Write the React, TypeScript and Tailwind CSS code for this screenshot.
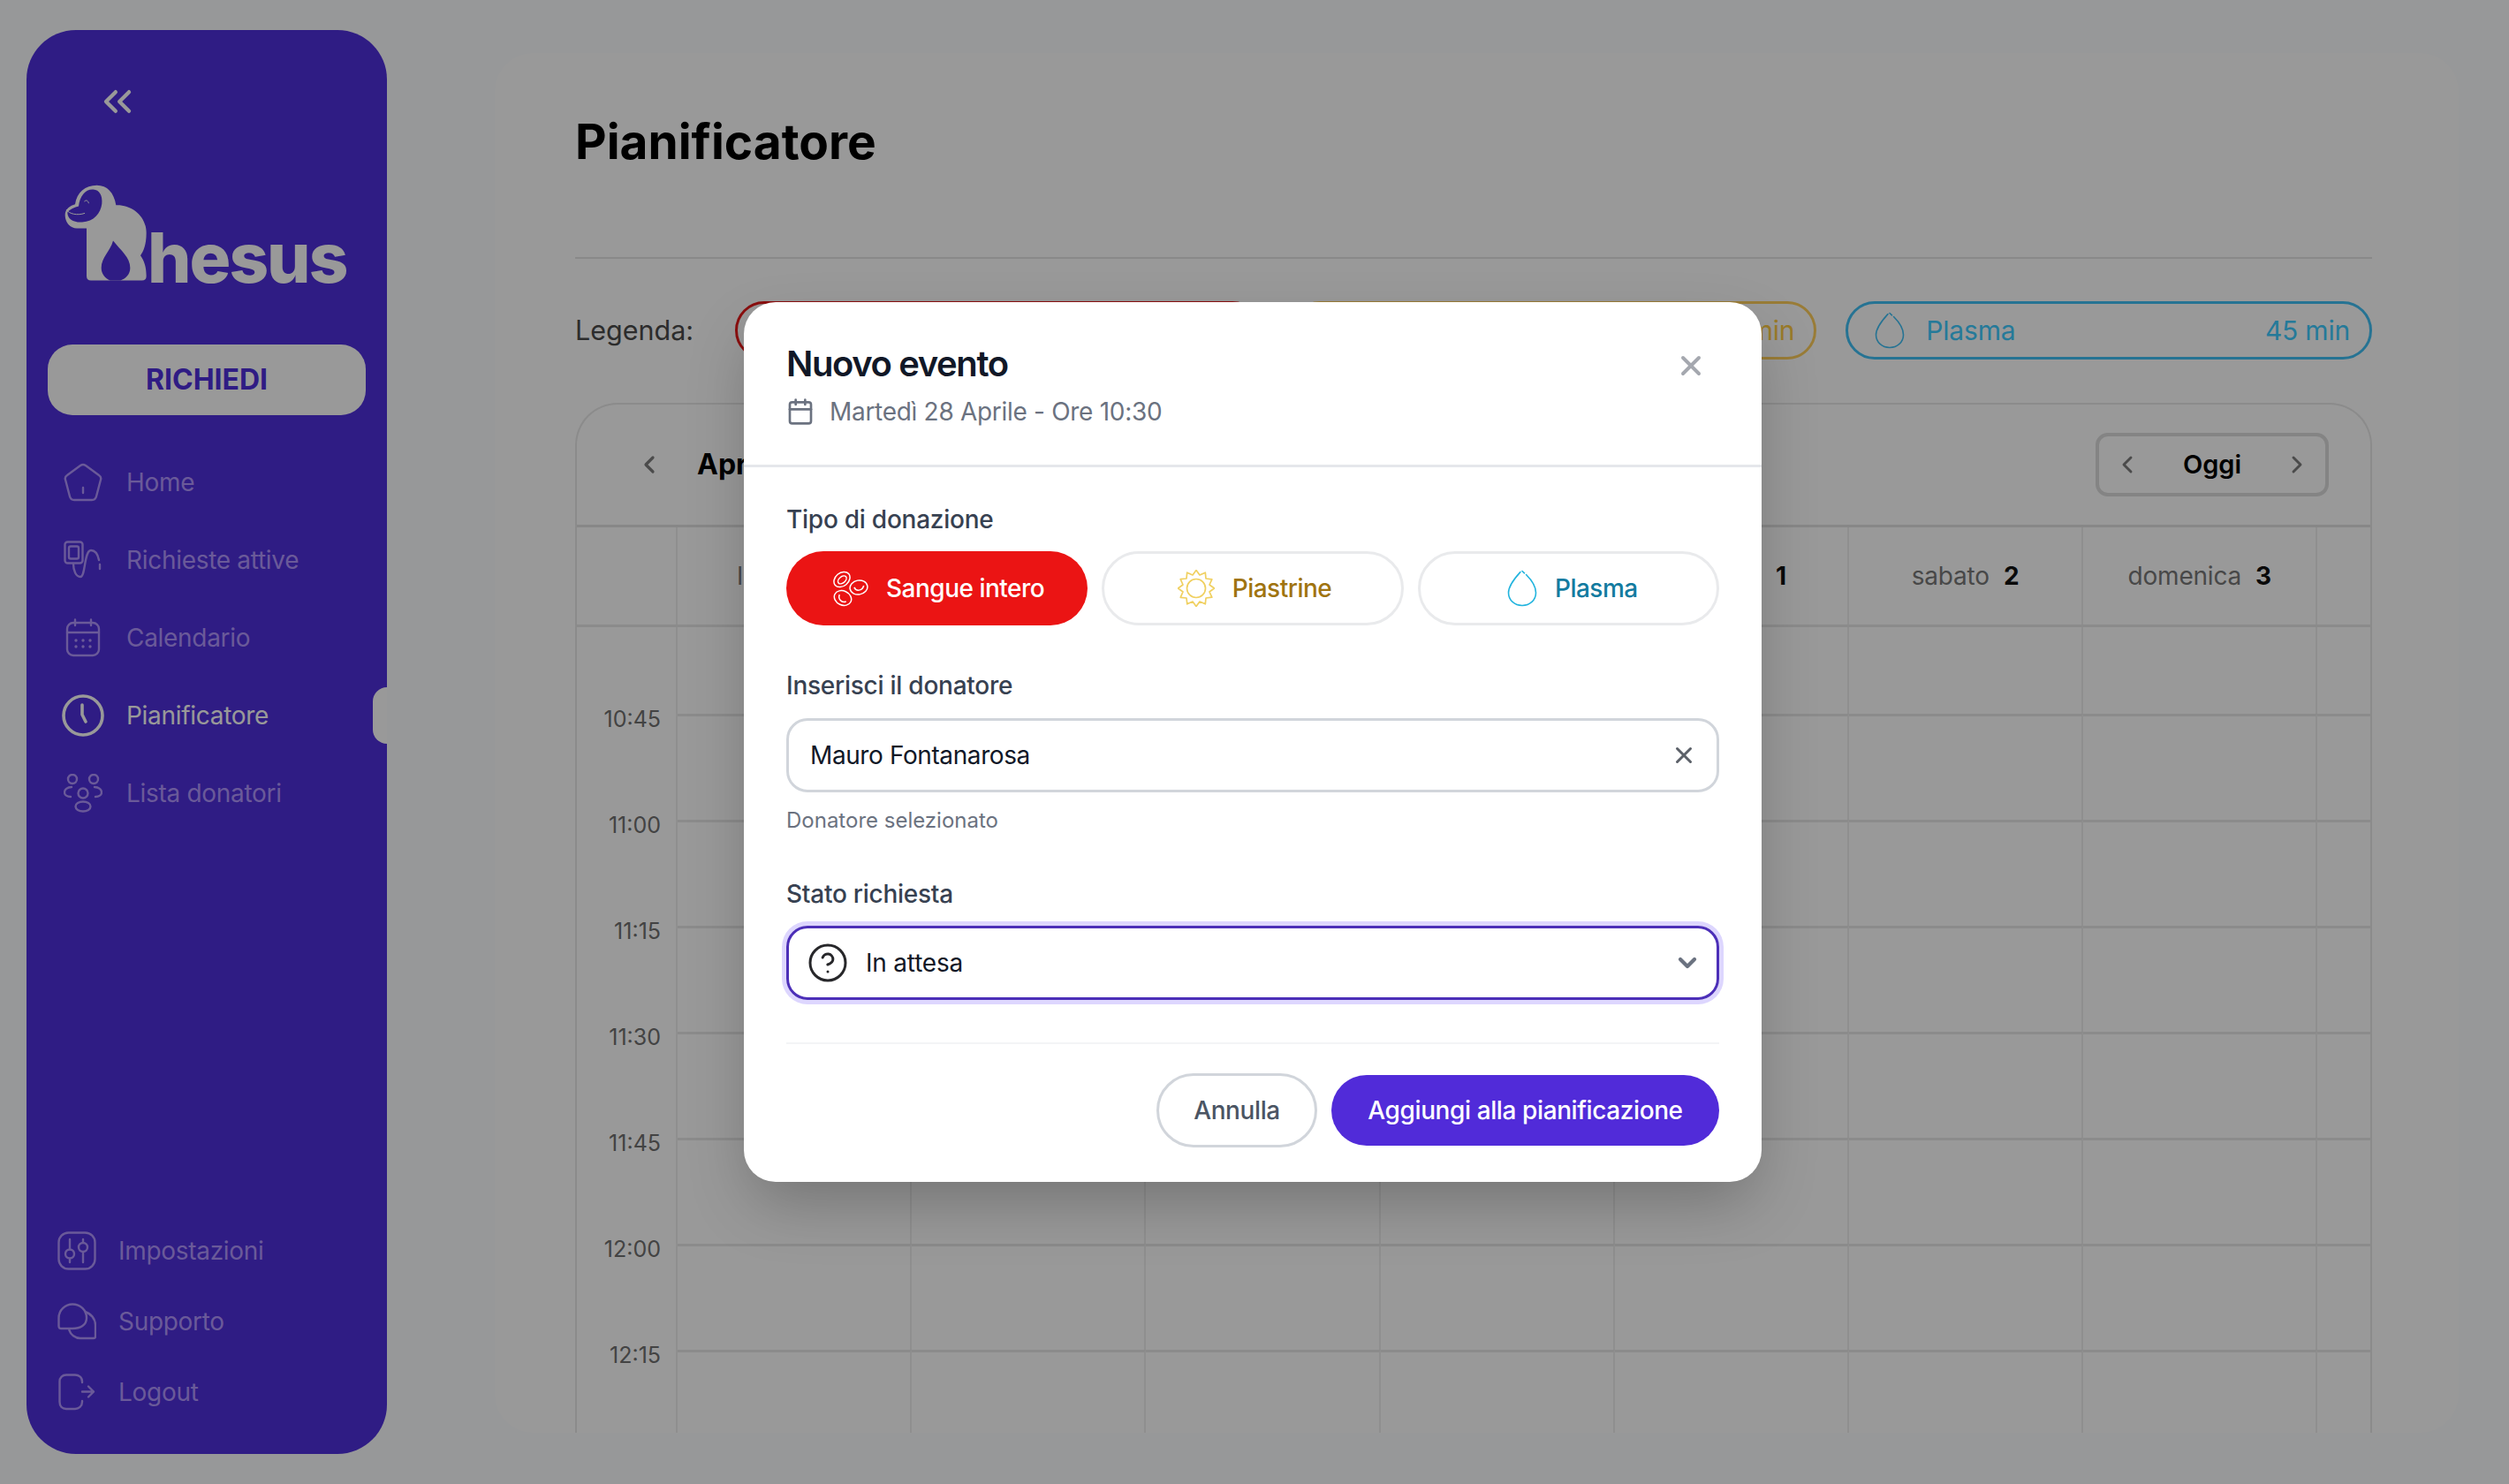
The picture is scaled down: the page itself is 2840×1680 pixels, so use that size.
import React from "react";
import { Calendar, ChevronDown, ChevronLeft, ChevronRight, ChevronsLeft, CircleHelp, X } from "lucide-react";

const Drop = ({ w, h, stroke, sw = 1.6 }: { w: number; h: number; stroke: string; sw?: number }) => (
  <svg width={w} height={h} viewBox="0 0 34 42" fill="none" stroke={stroke} strokeWidth={sw} className="shrink-0">
    <path d="M15 2.5 C10 8 1.5 17 1.5 26 C1.5 34.5 8.5 40.5 17 40.5 C25.5 40.5 32.5 34.5 32.5 26 C32.5 17 26 10 21.5 5.5 M17 1.5 L19.5 3.8" strokeLinecap="round" />
  </svg>
);

const sunPoints = Array.from({ length: 24 }, (_, i) => {
  const r = i % 2 === 0 ? 20.5 : 15.5;
  const a = (i * Math.PI) / 12 - Math.PI / 2;
  return `${(21 + r * Math.cos(a)).toFixed(1)},${(21 + r * Math.sin(a)).toFixed(1)}`;
}).join(" ");

const Sun = () => (
  <svg width="42" height="42" viewBox="0 0 42 42" fill="none" stroke="#f0d060" strokeWidth="1.7" className="shrink-0">
    <polygon points={sunPoints} strokeLinejoin="round" />
    <circle cx="21" cy="21" r="10.5" />
  </svg>
);

const Cells = ({ color = "#ffffff" }: { color?: string }) => (
  <svg width="40" height="42" viewBox="0 0 40 42" fill="none" stroke={color} strokeWidth="1.5" className="shrink-0">
    <g transform="rotate(-40 10 11)"><ellipse cx="10" cy="11" rx="10" ry="7.5" /><ellipse cx="10" cy="11.5" rx="5.5" ry="3.5" /></g>
    <g transform="rotate(-10 29 20)"><ellipse cx="29" cy="20" rx="10" ry="8" /><path d="M24 19 C25 24 32 25 35 19" /></g>
    <g transform="rotate(25 11 32)"><ellipse cx="11" cy="32" rx="10" ry="8" /><path d="M6 30 C6 35 12 38 16 34" /></g>
  </svg>
);

const IconHome = () => (
  <svg width="44" height="44" viewBox="0 0 44 44" fill="none" stroke="currentColor" strokeWidth="2.4" strokeLinejoin="round">
    <path d="M19 3 Q22 1 25 3 L40 14 Q43 16 42 19 L37 38 Q36 42 32 42 L12 42 Q8 42 7 38 L2 19 Q1 16 4 14 Z" />
    <path d="M22 28 V34" strokeLinecap="round" />
  </svg>
);
const IconMonitor = () => (
  <svg width="44" height="44" viewBox="0 0 44 44" fill="none" stroke="currentColor" strokeWidth="2.4" strokeLinecap="round" strokeLinejoin="round">
    <rect x="1.5" y="1.5" width="20" height="24" rx="3" />
    <rect x="6" y="6.5" width="11" height="14" rx="2" />
    <path d="M11 26 C11 34 14 41 19 41 C25 41 23 11 31 11 C37 11 39 17 40 22 M41 27 V32" />
  </svg>
);
const IconCalendar = () => (
  <svg width="44" height="44" viewBox="0 0 44 44" fill="none" stroke="currentColor" strokeWidth="2.4" strokeLinecap="round">
    <rect x="4" y="5" width="36" height="37" rx="7" />
    <path d="M4 16 H40 M13 1.5 V8 M31 1.5 V8" />
    <g fill="currentColor" stroke="none">
      <circle cx="14" cy="25" r="1.7" /><circle cx="22" cy="25" r="1.7" /><circle cx="30" cy="25" r="1.7" />
      <circle cx="14" cy="32" r="1.7" /><circle cx="22" cy="32" r="1.7" /><circle cx="30" cy="32" r="1.7" />
    </g>
  </svg>
);
const IconClock = () => (
  <svg width="48" height="48" viewBox="0 0 48 48" fill="none" stroke="currentColor" strokeWidth="3.6" strokeLinecap="round" strokeLinejoin="round">
    <circle cx="24" cy="24" r="22" />
    <path d="M23 12 V23 L27 31" />
  </svg>
);
const IconPeople = () => (
  <svg width="44" height="44" viewBox="0 0 44 44" fill="none" stroke="currentColor" strokeWidth="2.4" strokeLinecap="round">
    <circle cx="10" cy="6" r="5" /><circle cx="34" cy="6" r="5" />
    <circle cx="22" cy="22" r="5.5" />
    <path d="M9 15 C4 15 1 18 1 21 C1 24 4 26 8 26 M35 15 C40 15 43 18 43 21 C43 24 40 26 36 26" />
    <ellipse cx="22" cy="37" rx="8.5" ry="5.5" />
  </svg>
);
const IconSettings = () => (
  <svg width="44" height="44" viewBox="0 0 44 44" fill="none" stroke="currentColor" strokeWidth="2.4" strokeLinecap="round">
    <rect x="1.5" y="1.5" width="41" height="41" rx="11" />
    <path d="M14 9 V20 M14 32 V35 M29 9 V12 M29 24 V35" />
    <circle cx="14" cy="25.5" r="5" /><circle cx="29" cy="18" r="5" />
  </svg>
);
const IconSupport = () => (
  <svg width="44" height="42" viewBox="0 0 44 42" fill="none" stroke="currentColor" strokeWidth="2.4" strokeLinejoin="round">
    <path d="M1.5 26 V17 C1.5 8 9 1.5 17 1.5 C26 1.5 33 8 33 17 C33 25 26 29 17 29 H4.5 Q1.5 29 1.5 26 Z" />
    <path d="M31 10 C38 12 43 18 43 25 V38 Q43 40 41 40 H26 C20 40 15 36 13 30" />
  </svg>
);
const IconLogout = () => (
  <svg width="42" height="42" viewBox="0 0 42 42" fill="none" stroke="currentColor" strokeWidth="2.4" strokeLinecap="round" strokeLinejoin="round">
    <path d="M27 10 V9 C27 4 23 1.5 19 1.5 H9 C4.5 1.5 1.5 4.5 1.5 9 V32 C1.5 37 4.5 40 9 40 H19 C23 40 27 37 27 32 V31" />
    <path d="M27 20.5 H40 M34 14.5 L40 20.5 L34 26.5" />
  </svg>
);

const Logo = () => (
  <svg width="95" height="112" viewBox="40 55 285 335" className="shrink-0">
    <path fill="#ffffff" d="M42 160 C42 140 60 128 76 124 C82 85 110 60 150 60 C185 60 208 85 215 127 C270 125 318 165 318 222 C318 262 308 285 298 298 C310 315 318 335 318 368 Q318 383 303 383 L130 383 Q115 383 115 368 L115 206 L82 206 C60 206 42 186 42 160 Z" />
    <path fill="#4f2fdc" d="M50 152 C58 140 75 135 88 131 C92 95 112 72 138 74 C158 75 170 95 167 122 C163 155 140 183 100 185 C72 187 50 175 50 152 Z" />
    <path fill="none" stroke="#ffffff" strokeWidth="3" strokeLinecap="round" d="M47 143 C55 158 85 163 108 155 M108 114 C114 108 120 112 122 120" />
    <path fill="#4f2fdc" d="M205 248 C232 282 263 305 263 340 C263 362 248 376 230 383 L195 383 C178 376 165 360 165 340 C165 305 195 285 205 248 Z" />
  </svg>
);

const NavRow = ({ icon, label, active }: { icon: React.ReactNode; label: string; active?: boolean }) => (
  <div className={`flex h-[88px] items-center pl-[40px] ${active ? "text-white" : "text-[#b196ff]"}`}>
    <span className="flex w-[48px] justify-center">{icon}</span>
    <span className="ml-[25px] text-[28px] tracking-[-0.3px]">{label}</span>
  </div>
);
const BottomRow = ({ icon, label }: { icon: React.ReactNode; label: string }) => (
  <div className="flex h-[80px] items-center pl-[35px] text-[#b196ff]">
    <span className="flex w-[44px] justify-center">{icon}</span>
    <span className="ml-[25px] text-[28px] tracking-[-0.3px]">{label}</span>
  </div>
);

const cols = "grid grid-cols-[114px_repeat(7,265.2px)_1fr]";
// The labels of Tuesday, Wednesday and Thursday lie fully behind the dialog.
const days: [string, string][] = [
  ["lunedì", "27"], ["", ""], ["", ""], ["", ""],
  ["venerdì", "1"], ["sabato", "2"], ["domenica", "3"],
];
const times = ["", "10:45", "11:00", "11:15", "11:30", "11:45", "12:00", "12:15"];

const Pill = ({ border, text, icon, label, dur }: { border: string; text: string; icon: React.ReactNode; label: string; dur: string }) => (
  <div className={`flex h-[66px] flex-1 items-center rounded-full border-[3px] pl-[30px] pr-[22px] text-[30px] tracking-[-0.2px] ${border} ${text}`}>
    {icon}
    <span className="ml-[24px]">{label}</span>
    <span className="ml-auto">{dur}</span>
  </div>
);

const DonationBtn = ({ cls, icon, label }: { cls: string; icon: React.ReactNode; label: string }) => (
  <div className={`flex h-[84px] items-center justify-center gap-[20px] rounded-full text-[28px] font-medium tracking-[-0.5px] ${cls}`}>
    {icon}
    <span>{label}</span>
  </div>
);

export default function App() {
  return (
    <div className="relative flex h-[1680px] w-[2840px] overflow-hidden bg-[#fcfdff] font-['Inter',sans-serif]">
      <aside className="ml-[30px] mt-[34px] flex h-[1612px] w-[408px] shrink-0 flex-col rounded-[56px] bg-[#4f2fdc] pb-[30px]">
        <div className="ml-[77px] mt-[55px] text-white">
          <ChevronsLeft size={52} strokeWidth={2} />
        </div>
        <div className="ml-[43px] mt-[67px] flex items-end">
          <Logo />
          <span className="-ml-[1px] text-[78px] font-extrabold leading-[57px] tracking-[-2px] text-white">hesus</span>
        </div>
        <div className="ml-[24px] mt-[70px] flex h-[80px] w-[360px] items-center justify-center rounded-[28px] bg-white text-[32px] font-bold text-[#4f2fdc]">
          RICHIEDI
        </div>
        <nav className="relative mt-[32px]">
          <NavRow icon={<IconHome />} label="Home" />
          <NavRow icon={<IconMonitor />} label="Richieste attive" />
          <NavRow icon={<IconCalendar />} label="Calendario" />
          <NavRow icon={<IconClock />} label="Pianificatore" active />
          <NavRow icon={<IconPeople />} label="Lista donatori" />
          <div className="absolute right-0 top-[276px] h-[64px] w-[16px] rounded-l-[16px] bg-white" />
        </nav>
        <div className="mt-auto">
          <BottomRow icon={<IconSettings />} label="Impostazioni" />
          <BottomRow icon={<IconSupport />} label="Supporto" />
          <BottomRow icon={<IconLogout />} label="Logout" />
        </div>
      </aside>

      <main className="ml-[122px] mt-[60px] flex h-[1562px] w-[2223px] flex-col overflow-hidden rounded-[44px] bg-white pl-[91px] pr-[98px]">
        <h1 className="mt-[64px] text-[55px] font-bold leading-[72px] text-black">Pianificatore</h1>
        <div className="mt-[95px] h-[2px] bg-[#e5e5e5]" />
        <div className="mt-[48px] flex items-center gap-[33px]">
          <span className="-mr-[33px] w-[181px] shrink-0 text-[30.5px] text-[#4a4a4a]">Legenda:</span>
          <Pill border="border-[#e61a1a]" text="text-[#e61a1a]" icon={<Cells color="#e61a1a" />} label="Sangue intero" dur="60 min" />
          <Pill border="border-[#ffcf5c]" text="text-[#ffcc44]" icon={<Sun />} label="Piastrine" dur="60 min" />
          <Pill border="border-[#40c0f5]" text="text-[#3ecbff]" icon={<Drop w={34} h={42} stroke="#40c0f5" />} label="Plasma" dur="45 min" />
        </div>
        <section className="mt-[49px] min-h-0 flex-1 overflow-hidden rounded-t-[48px] border-x-2 border-t-2 border-[#e8e8e8]">
          <header className="flex h-[139px] items-center justify-between border-b-[3px] border-[#e2e2e2] pl-[66px] pr-[47px]">
            <div className="flex items-center text-[32px] font-bold text-black">
              <ChevronLeft size={32} strokeWidth={2.4} className="text-[#7d7d7d]" />
              <span className="ml-[38px]">Aprile 2026</span>
            </div>
            <div className="flex h-[72px] w-[264px] items-center justify-between rounded-[14px] border-[4px] border-[#dcdcdc] px-[16px] text-[29px] font-semibold text-black">
              <ChevronLeft size={32} strokeWidth={2.2} className="text-[#7d7d7d]" />
              <span>Oggi</span>
              <ChevronRight size={32} strokeWidth={2.2} className="text-[#7d7d7d]" />
            </div>
          </header>
          <div className={`${cols} h-[113px] border-b-[3px] border-[#e8e8e8]`}>
            <div className="border-r-2 border-[#eeeeee]" />
            {days.map(([d, n], k) => (
              <div key={k} className="flex items-center justify-center gap-[16px] border-r-2 border-[#eeeeee] text-[28px] tracking-[-0.2px]">
                <span className="text-[#787878]">{d}</span>
                <span className="font-bold text-[#111111]">{n}</span>
              </div>
            ))}
            <div />
          </div>
          {times.map((t, i) => (
            <div key={i} className={`${cols} ${i === 0 ? "h-[98px]" : "h-[120px]"}`}>
              <div className="border-r-2 border-[#eeeeee] pr-[17px] text-right text-[25px] leading-[32px] text-[#707070]">
                <div className="-mt-[10px]">{t}</div>
              </div>
              {days.map((_, k) => (
                <div key={k} className={`border-r-2 border-[#eeeeee] ${i === 0 ? "" : "border-t-[3px] border-t-[#e8e8e8]"}`} />
              ))}
              <div className={i === 0 ? "" : "border-t-[3px] border-t-[#e8e8e8]"} />
            </div>
          ))}
        </section>
      </main>

      <div className="absolute inset-0 bg-black/40">
        <div className="absolute left-[842px] top-[342px] flex h-[996px] w-[1152px] flex-col rounded-[36px] bg-white shadow-[0_30px_70px_-10px_rgba(0,0,0,0.25)]">
          <div className="relative h-[187px] border-b-[3px] border-[#e5e7eb] px-[48px] pt-[46px]">
            <h2 className="text-[40px] font-semibold leading-[48px] tracking-[-1.4px] text-[#111827]">Nuovo evento</h2>
            <div className="mt-[10px] flex items-center gap-[17px] text-[28px] leading-[40px] tracking-[-0.3px] text-[#6b7280]">
              <Calendar size={32} strokeWidth={2} />
              <span>Martedì 28 Aprile - Ore 10:30</span>
            </div>
            <X size={36} strokeWidth={2.6} className="absolute right-[62px] top-[54px] text-[#a5a8af]" />
          </div>
          <div className="flex flex-1 flex-col px-[48px]">
            <label className="mt-[41px] text-[28px] font-medium leading-[36px] tracking-[-0.25px] text-[#374151]">Tipo di donazione</label>
            <div className="mt-[18px] grid grid-cols-3 gap-[16px]">
              <DonationBtn cls="bg-[#eb1414] pl-[4px] text-white" icon={<Cells />} label="Sangue intero" />
              <DonationBtn cls="border-[3px] border-[#e9eaec] pl-[4px] text-[#a07410]" icon={<Sun />} label="Piastrine" />
              <DonationBtn cls="border-[3px] border-[#e9eaec] pl-[9px] text-[#137ba0]" icon={<Drop w={34} h={42} stroke="#22b4de" />} label="Plasma" />
            </div>
            <label className="mt-[50px] text-[28px] font-medium leading-[36px] tracking-[-0.25px] text-[#374151]">Inserisci il donatore</label>
            <div className="mt-[19px] flex h-[84px] items-center justify-between rounded-[24px] border-[3px] border-[#d1d5db] pl-[24px] pr-[22px] text-[28px] tracking-[-0.4px] text-[#111827]">
              <span>Mauro Fontanarosa</span>
              <X size={30} strokeWidth={2.4} className="text-[#5b6068]" />
            </div>
            <p className="mt-[16px] text-[24px] leading-[32px] text-[#6b7280]">Donatore selezionato</p>
            <label className="mt-[49px] text-[28px] font-medium leading-[36px] tracking-[-0.25px] text-[#374151]">Stato richiesta</label>
            <div className="mt-[18px] flex h-[84px] items-center rounded-[24px] border-[3px] border-[#4c2fb8] pl-[20px] pr-[17px] text-[28px] tracking-[-0.2px] text-[#111827] shadow-[0_0_0_5px_#ddd6fe]">
              <CircleHelp size={48} strokeWidth={1.5} className="text-[#27272a]" />
              <span className="ml-[19px]">In attesa</span>
              <ChevronDown size={32} strokeWidth={3.2} className="ml-auto text-[#6b7280]" />
            </div>
            <div className="mt-[48px] h-[2px] bg-[#f3f4f6]" />
            <div className="mt-[33px] flex items-center justify-end gap-[16px] text-[28px] font-medium tracking-[-0.4px]">
              <div className="flex h-[84px] w-[182px] items-center justify-center rounded-full border-[3px] border-[#d1d5db] text-[#4b5563]">Annulla</div>
              <div className="flex h-[80px] w-[439px] items-center justify-center rounded-full bg-[#512bd9] text-white">Aggiungi alla pianificazione</div>
            </div>
          </div>
        </div>
      </div>
    </div>
  );
}
